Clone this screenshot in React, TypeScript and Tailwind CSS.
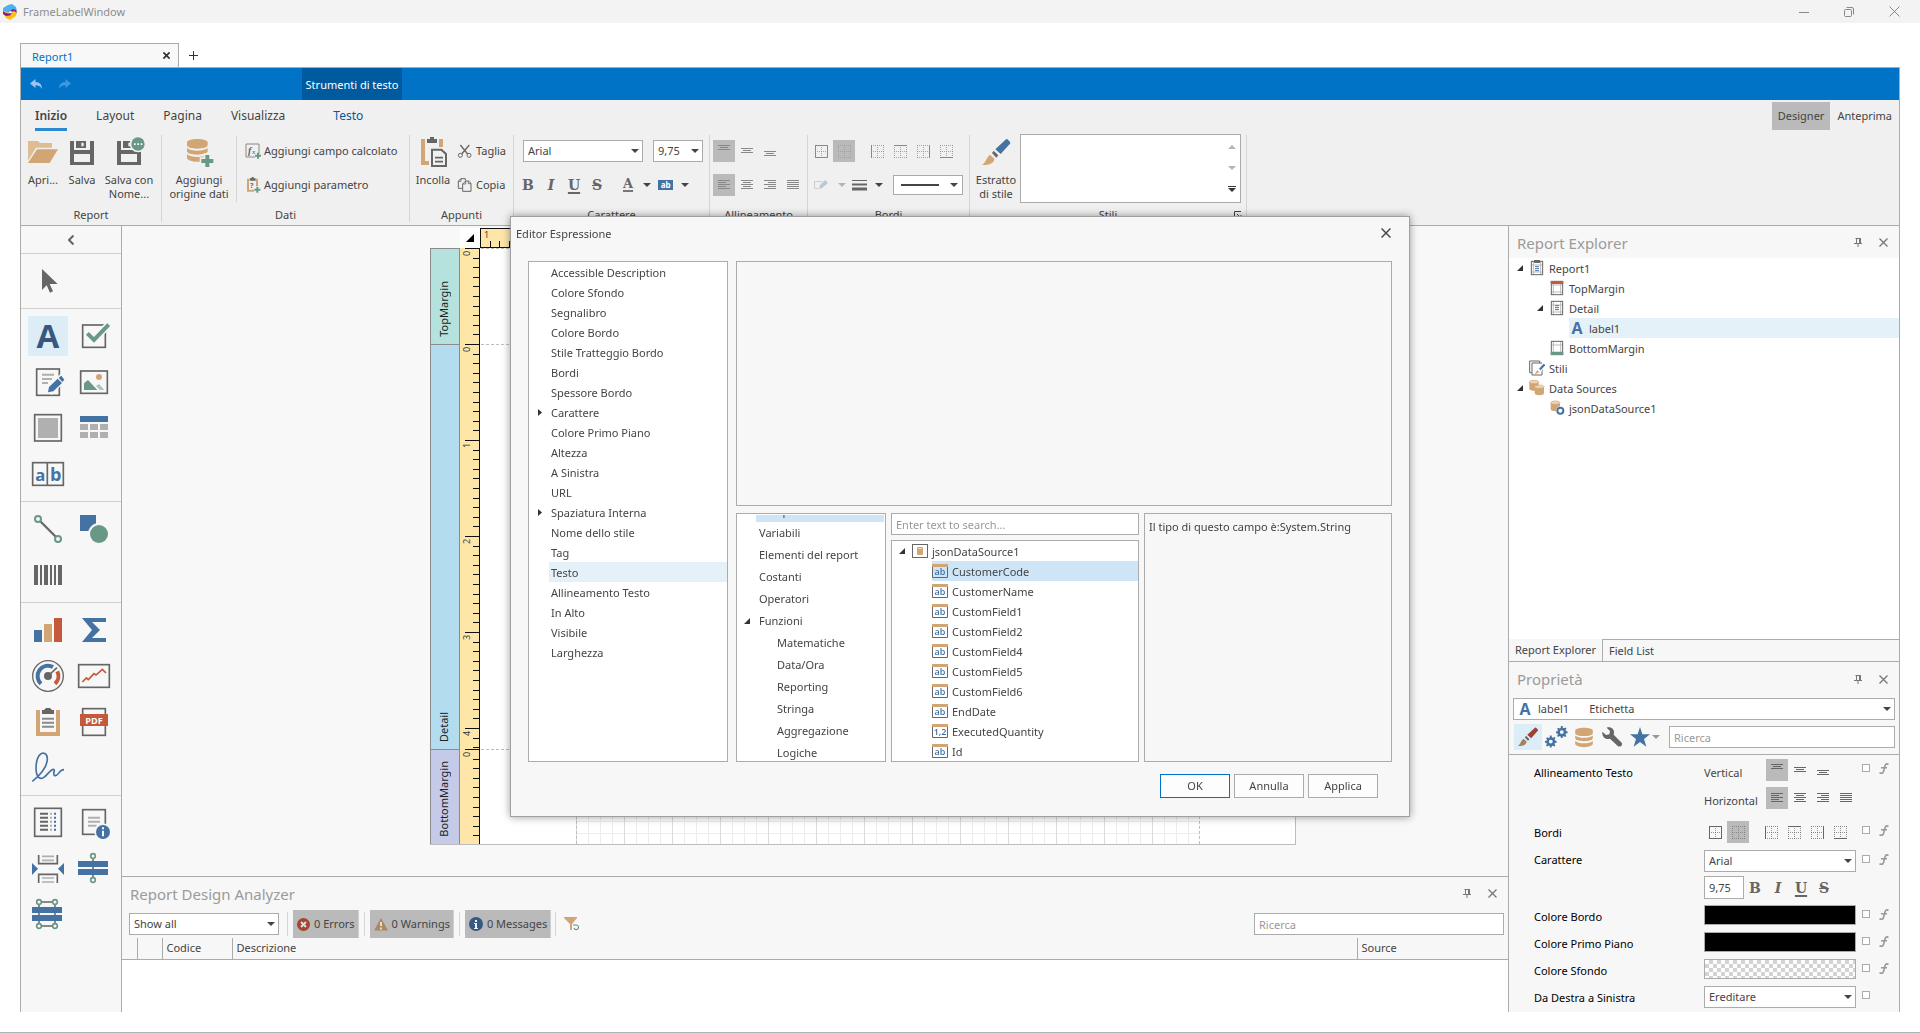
import React from "react";

const FONT = "font-['Noto_Sans','Open_Sans',sans-serif]";
const GRAY = "#666666";
const BLUE = "#4472a3";
const GREEN = "#6a9886";
const TAN = "#d2a574";
const RED = "#c4593b";

/* ---------- small shared pieces ---------- */

function Svg({ w, h, vb, children, className }: { w: number; h: number; vb: string; children: React.ReactNode; className?: string }) {
  return (
    <svg width={w} height={h} viewBox={vb} className={className ? "shrink-0 " + className : "shrink-0"} aria-hidden="true" fill="none">
      {children}
    </svg>
  );
}

function Caret({ className = "fill-[#444]" }: { className?: string }) {
  return (
    <svg width="8" height="4" viewBox="0 0 8 4" className={"shrink-0 " + className} aria-hidden="true">
      <path d="M0 0h8L4 4z" />
    </svg>
  );
}

function Expander({ open }: { open: boolean }) {
  return open ? (
    <Svg w={7} h={7} vb="0 0 7 7"><path d="M6 0v6H0z" fill="#333" /></Svg>
  ) : (
    <Svg w={5} h={9} vb="0 0 5 9"><path d="M0 1l4 3.500L0 8z" fill="#333" /></Svg>
  );
}

function Combo({ label, value, className }: { label: string; value: string; className: string }) {
  return (
    <div className={"relative h-[22px] shrink-0 " + className}>
      <select aria-label={label} defaultValue={value} className="h-full w-full appearance-none rounded-none border border-[#ababab] bg-white pl-1 pr-4 text-[#444] outline-none">
        <option>{value}</option>
      </select>
      <span className="pointer-events-none absolute inset-y-0 right-1 flex items-center"><Caret /></span>
    </div>
  );
}

function VSep({ className = "h-5" }: { className?: string }) {
  return <span className={"w-px shrink-0 bg-[#d5d5d5] " + className} />;
}

function Tool({ label, active, children, className = "h-[22px] w-[22px]" }: { label: string; active?: boolean; children: React.ReactNode; className?: string }) {
  return (
    <button type="button" aria-label={label} className={"flex shrink-0 items-center justify-center " + className + (active ? " bg-[#bababa]" : "")}>
      {children}
    </button>
  );
}

function VAlign({ at, color }: { at: number; color: string }) {
  return (
    <Svg w={13} h={14} vb="0 0 13 14">
      <g fill={color}><rect x="0" y={at} width="12" height="1" /><rect x="2" y={at + 2} width="8" height="1" /><rect x="0" y={at + 4} width="12" height="1" /></g>
    </Svg>
  );
}

function HAlign({ mode, color }: { mode: "left" | "center" | "right" | "justify"; color: string }) {
  return (
    <Svg w={13} h={10} vb="0 0 13 10">
      <g fill={color}>
        {[0, 2, 4, 6, 8].map((y, i) => {
          const w = mode === "justify" || i % 2 === 0 ? 12 : 8;
          const x = mode === "right" ? 12 - w : mode === "center" ? (12 - w) / 2 : 0;
          return <rect key={y} x={x} y={y} width={w} height="1" />;
        })}
      </g>
    </Svg>
  );
}

function BorderIcon({ side, color }: { side: "all" | "none" | "left" | "top" | "right" | "bottom"; color: string }) {
  const solid: Record<string, string> = {
    all: "M.5.5h12v12H.5z", none: "", left: "M.5 0v13", top: "M0 .5h13", right: "M12.5 0v13", bottom: "M0 12.5h13",
  };
  return (
    <Svg w={13} h={13} vb="0 0 13 13">
      <path d="M0 .5h13M0 6.5h13M0 12.5h13M.5 0v13M6.5 0v13M12.5 0v13" stroke={color} strokeOpacity="0.7" strokeDasharray="1 1" />
      <path d={solid[side]} stroke={color} />
    </Svg>
  );
}

function FontStyleButtons({ gap }: { gap: string }) {
  const base = "flex w-3 shrink-0 justify-center font-['DejaVu_Serif',serif] text-sm leading-5 font-bold text-[#666]";
  return (
    <div className={"flex items-center " + gap}>
      <button type="button" aria-label="Grassetto" className={base}>B</button>
      <button type="button" aria-label="Corsivo" className={base + " italic"}>I</button>
      <button type="button" aria-label="Sottolineato" className={base + " underline decoration-2 underline-offset-2"}>U</button>
      <button type="button" aria-label="Barrato" className={base + " line-through"}>S</button>
    </div>
  );
}

function Pin() {
  return <Svg w={9} h={9} vb="0 0 9 9"><path d="M2.5 0v5M1.5.5h5M0 5.5h8M4 6v3" stroke="#777" /><path d="M5 0h2v5H5z" fill="#777" /></Svg>;
}

function Cross({ size = 9, color = "#777", weight = 1.3 }: { size?: number; color?: string; weight?: number }) {
  return <Svg w={size} h={size} vb="0 0 9 9"><path d="M.5.5l8 8M8.5.5l-8 8" stroke={color} strokeWidth={weight} /></Svg>;
}

function PanelHeader({ title, className }: { title: string; className: string }) {
  return (
    <div className={"flex shrink-0 items-center justify-between pl-2 pr-[11px] " + className}>
      <h2 className="text-[15px] leading-5 text-[#9b9b9b]">{title}</h2>
      <div className="flex items-center gap-4">
        <button type="button" aria-label={"Fissa " + title}><Pin /></button>
        <button type="button" aria-label={"Chiudi " + title}><Cross /></button>
      </div>
    </div>
  );
}

/* ---------- ribbon icons ---------- */

const FolderIcon = () => (
  <Svg w={32} h={32} vb="0 0 96 96"><path d="M3 15h30l6 6h36v14H27L3 74z" fill="#dfbc93" /><path d="M3 81l27-41h63L68 81z" fill={TAN} /></Svg>
);
const Floppy = () => (
  <>
    <path d="M12 15h12v27h48V15h12v72H12zM24 54v24h48V54z" fillRule="evenodd" fill={GRAY} />
    <path d="M30 15h30v21H30zM46 20v11h7V20z" fillRule="evenodd" fill={GRAY} />
  </>
);
const SaveIcon = () => <Svg w={32} h={32} vb="0 0 96 96"><Floppy /></Svg>;
const SaveAsIcon = () => (
  <Svg w={32} h={32} vb="0 0 96 96"><Floppy /><circle cx="75" cy="24" r="25" fill="#f0f0f0" /><circle cx="75" cy="24" r="20" fill={GREEN} /><path d="M63 22h5v5h-5zM73 22h5v5h-5zM83 22h5v5h-5z" fill="#fff" /></Svg>
);
const Cylinder = () => (
  <g fill={TAN}>
    <path d="M12 19c0-6 14-10 31-10s31 4 31 10v9c0 6-14 10-31 10S12 34 12 28z" />
    <path d="M12 36c6 6 18 8 31 8s25-2 31-8v10c0 6-14 10-31 10S12 52 12 46z" />
    <path d="M12 55c6 6 18 8 31 8s25-2 31-8v10c0 6-14 12-31 12S12 71 12 65z" />
  </g>
);
const DbAddIcon = () => (
  <Svg w={32} h={32} vb="0 0 96 96"><Cylinder /><path d="M73 52v44M50 75h46" stroke="#f0f0f0" strokeWidth="22" /><path d="M73 57v36M55 75h36" stroke={GREEN} strokeWidth="12" /></Svg>
);
const PasteIcon = () => (
  <Svg w={32} h={32} vb="0 0 96 96"><path d="M12 9h12v66h12v12H12zM66 9h12v24H66z" fill={TAN} /><path d="M30 9h9V3h12v6h9v12H30z" fill={GRAY} /><path d="M45 41h28l14 13v36H45z" stroke={GRAY} strokeWidth="6" /><path d="M54 65h24M54 77h24" stroke={GRAY} strokeWidth="5" /></Svg>
);
const BrushShape = ({ handle, tip }: { handle: string; tip: string }) => (
  <>
    <path d="M78 10q3-2 6 1l6 7q2 3 0 5L62 54 46 40z" fill={handle} />
    <path d="M41 44l14 14-6 7-13-14z" fill={GRAY} />
    <path d="M6 87c12-7 14-25 24-31l13 12c0 14-18 20-37 19z" fill={tip} />
  </>
);
const BrushIcon = () => <Svg w={32} h={32} vb="0 0 96 96"><BrushShape handle={BLUE} tip={TAN} /></Svg>;

const CalcFieldIcon = () => (
  <Svg w={16} h={16} vb="0 0 48 48"><path d="M3 3h39v30M3 3v39h27" stroke="#888" strokeWidth="3" /><text x="9" y="32" fontSize="30" fontStyle="italic" fontWeight="bold" fontFamily="Liberation Serif" fill={GRAY}>f</text><text x="22" y="33" fontSize="18" fontStyle="italic" fontWeight="bold" fontFamily="Liberation Serif" fill={GRAY}>x</text><path d="M39 29v18M30 38h18" stroke={GREEN} strokeWidth="6" /></Svg>
);
const ParamIcon = () => (
  <Svg w={16} h={16} vb="0 0 48 48"><path d="M9 5v36h18M36 5v22" stroke={TAN} strokeWidth="6" /><path d="M14 4h18v7H14zM20 0h6v5h-6z" fill={GRAY} /><text x="15" y="33" fontSize="22" fontWeight="bold" fontFamily="Open Sans" fill={GRAY}>?</text><path d="M37 29v18M28 38h18" stroke={GREEN} strokeWidth="6" /></Svg>
);
const CutIcon = () => (
  <Svg w={16} h={16} vb="0 0 48 48"><circle cx="10" cy="37" r="6" stroke={GRAY} strokeWidth="3" /><circle cx="36" cy="37" r="6" stroke={GRAY} strokeWidth="3" /><path d="M10 6l22 27M37 6L14 33" stroke={GRAY} strokeWidth="4" /></Svg>
);
const CopyIcon = () => (
  <Svg w={16} h={16} vb="0 0 48 48"><path d="M16 34H4V12L12 5h13v6" stroke={GRAY} strokeWidth="3" /><path d="M26 12h9l7 7v24H17V21z" stroke={GRAY} strokeWidth="3" /><path d="M26 12v9h-9M12 5v8H4M34 12v8h8" stroke={GRAY} strokeWidth="2.5" /></Svg>
);

/* ---------- toolbox icons ---------- */

function TB({ children }: { children: React.ReactNode }) {
  return <Svg w={40} h={40} vb="0 0 120 120">{children}</Svg>;
}
const G6 = { stroke: GRAY, strokeWidth: 5 };

const toolbox: { name: string; icon: React.ReactNode; active?: boolean }[][] = [
  [
    { name: "Puntatore", icon: <TB><path d="M42 24v63l14-14 10 22 9-4-10-22h24z" fill={GRAY} /></TB> },
  ],
  [
    { name: "Etichetta", active: true, icon: <span className="font-['Open_Sans',sans-serif] text-[33px] leading-10 font-bold text-[#36577f]">A</span> },
    { name: "Casella di controllo", icon: <TB><rect x="26" y="27" width="68" height="67" {...G6} /><path d="M40 50l20 20 46-46" stroke="#f7f7f7" strokeWidth="22" /><path d="M40 52l20 20 44-46" stroke={GREEN} strokeWidth="12" /></TB> },
    { name: "Testo formattato", icon: <TB><rect x="26" y="21" width="68" height="79" {...G6} /><path d="M42 38h36M42 51h30M42 63h18" stroke="#b0b0b0" strokeWidth="6" /><path d="M62 90l46-46" stroke="#f7f7f7" strokeWidth="26" /><path d="M60 91l3-16 26-25 13 13-26 25zM92 47l8-6 9 12-6 7z" fill={BLUE} /></TB> },
    { name: "Immagine", icon: <TB><rect x="20" y="27" width="80" height="67" {...G6} /><circle cx="75" cy="45" r="9" fill={TAN} /><path d="M30 84V64l12-10 28 30z" fill={GREEN} /><path d="M66 72l9-6 16 18H78z" fill="#a9c5ba" /></TB> },
    { name: "Pannello", icon: <TB><rect x="20" y="20" width="80" height="79" {...G6} /><rect x="30" y="30" width="60" height="60" fill="#b0b0b0" /></TB> },
    { name: "Tabella", icon: <TB><rect x="18" y="24" width="84" height="18" fill={BLUE} /><path d="M18 48h24v18H18zM48 48h24v18H48zM78 48h24v18H78zM18 72h24v18H18zM48 72h24v18H48zM78 72h24v18H78z" fill="#b0b0b0" /></TB> },
    { name: "Testo a caratteri", icon: <TB><rect x="14" y="26" width="92" height="68" {...G6} /><path d="M58 26v68" {...G6} /><text x="22" y="80" fontSize="50" fontWeight="bold" fontFamily="Open Sans" fill={BLUE}>a</text><text x="66" y="80" fontSize="54" fontWeight="bold" fontFamily="Open Sans" fill={BLUE}>b</text></TB> },
  ],
  [
    { name: "Linea", icon: <TB><path d="M36 36l48 48" stroke={GRAY} strokeWidth="7" /><circle cx="30" cy="30" r="9" stroke={GREEN} strokeWidth="6" /><circle cx="90" cy="90" r="9" stroke={GREEN} strokeWidth="6" /></TB> },
    { name: "Forma", icon: <TB><rect x="18" y="18" width="48" height="48" fill={BLUE} /><circle cx="75" cy="75" r="33" fill="#f7f7f7" /><circle cx="75" cy="75" r="27" fill={GREEN} /></TB> },
    { name: "Codice a barre", icon: <TB><path d="M18 30h12v60H18zM36 30h6v60h-6zM48 30h12v60H48zM66 30h6v60h-6zM78 30h6v60h-6zM90 30h12v60H90z" fill={GRAY} /></TB> },
  ],
  [
    { name: "Grafico", icon: <TB><rect x="18" y="60" width="24" height="36" fill={BLUE} /><rect x="48" y="42" width="24" height="54" fill={TAN} /><rect x="78" y="24" width="24" height="72" fill={RED} /></TB> },
    { name: "Tabella pivot", icon: <TB><path d="M24 24h72v12H54l24 24-24 24h42v12H24l30-36z" fill={BLUE} /></TB> },
    { name: "Indicatore", icon: <TB><circle cx="60" cy="60" r="46" stroke={GRAY} strokeWidth="4" /><path d="M39 83A31 31 0 0 1 75 33" stroke={BLUE} strokeWidth="12" /><path d="M88 46A31 31 0 0 1 81 83" stroke={RED} strokeWidth="12" /><circle cx="60" cy="60" r="12" fill={GRAY} /><path d="M60 60l27-25" stroke={GRAY} strokeWidth="5" /></TB> },
    { name: "Sparkline", icon: <TB><rect x="14" y="26" width="92" height="68" {...G6} /><path d="M25 78l12-12 6 5 17-18 6 4 19-17 11 11" stroke={RED} strokeWidth="5" /></TB> },
    { name: "Sottoreport", icon: <TB><path d="M24 24h12v66h48V24h12v78H24z" fill={TAN} /><path d="M42 24h6l6-6h12l6 6h6v12H42z" fill={GRAY} /><path d="M42 50h36M42 62h36M42 74h36" stroke="#8a8a8a" strokeWidth="6" /></TB> },
    { name: "Contenuto PDF", icon: <TB><rect x="26" y="20" width="68" height="80" {...G6} /><rect x="18" y="36" width="84" height="36" fill={RED} /><text x="60" y="65" textAnchor="middle" fontSize="27" fontWeight="bold" fontFamily="Open Sans" fill="#fff">PDF</text></TB> },
    { name: "Firma", icon: <TB><path d="M13 100C38 80 58 58 58 32c0-17-14-20-22-12-14 14-16 56-4 68 16 14 32-24 44-24 8 0-4 16 4 19 12 2 12-18 28-18" stroke={BLUE} strokeWidth="5" /></TB> },
  ],
  [
    { name: "Sommario", icon: <TB><rect x="20" y="16" width="80" height="84" {...G6} /><path d="M36 32h24M36 44h24M36 56h24M36 68h24M36 80h24" stroke={GRAY} strokeWidth="6" /><path d="M69 29v56" stroke="#b0b0b0" strokeWidth="6" strokeDasharray="6 6" /><path d="M81 29v56" stroke={BLUE} strokeWidth="6" strokeDasharray="6 6" /></TB> },
    { name: "Informazioni pagina", icon: <TB><rect x="26" y="20" width="68" height="74" {...G6} /><path d="M42 44h36M42 56h36M42 68h26" stroke="#b0b0b0" strokeWidth="6" /><circle cx="87" cy="87" r="26" fill="#f7f7f7" /><circle cx="87" cy="87" r="21" fill={BLUE} /><path d="M84 73h6v6h-6zM84 83h6v17h-6z" fill="#fff" /></TB> },
    { name: "Interruzione di pagina", icon: <TB><path d="M32 18v26h56V18M32 102V76h56v26" {...G6} /><path d="M42 22h36M42 34h36M42 87h36M42 99h36" stroke="#b0b0b0" strokeWidth="5" /><path d="M12 42l18 17-18 19zM108 42L90 59l18 19z" fill={BLUE} /></TB> },
    { name: "Linea tra bande", icon: <TB><path d="M57 27v60" stroke="#888" strokeWidth="6" /><circle cx="57" cy="21" r="7" stroke={GREEN} strokeWidth="5" /><circle cx="57" cy="93" r="7" stroke={GREEN} strokeWidth="5" /><path d="M12 36h90v18H12zM12 60h90v18H12z" fill={BLUE} /></TB> },
    { name: "Riquadro tra bande", icon: <TB><rect x="33" y="21" width="48" height="72" stroke="#888" strokeWidth="6" /><g stroke={GREEN} strokeWidth="5" fill="#f7f7f7"><circle cx="33" cy="21" r="7" /><circle cx="81" cy="21" r="7" /><circle cx="33" cy="93" r="7" /><circle cx="81" cy="93" r="7" /></g><path d="M12 36h90v18H12zM12 60h90v18H12z" fill={BLUE} /></TB> },
  ],
];

/* ---------- window frame ---------- */

function TitleBar() {
  return (
    <header className="flex h-[23px] shrink-0 items-center justify-between bg-[#f3f3f3] pl-[3px] pr-5">
      <div className="flex items-center gap-1.5">
        <Svg w={14} h={16} vb="0 0 14 16"><path d="M0 9l3 5 4 2 6-4 1-4-3-1-3 3-4-2z" fill="#fcc10f" /><path d="M5 1l4-1 4 3 1 4-4-1-2 3-5-1-3-1V4z" fill="#4db2ec" /><path d="M0 7l3 2 3 .5 2-1.500 1 1-2 2.500-4 .5L0 10zM14 9l-1-3-3-1-3 2 2 1 2-1z" fill="#8c1a8c" /><path d="M6 8l2-1 1 1.500-2 1z" fill="#fff" /></Svg>
        <span className="text-[11px] leading-4 text-[#8d8d8d]">FrameLabelWindow</span>
      </div>
      <div className="flex items-center gap-[35px]">
        <button type="button" aria-label="Riduci a icona"><Svg w={10} h={10} vb="0 0 10 10"><path d="M0 5.5h10" stroke="#888" /></Svg></button>
        <button type="button" aria-label="Ripristina"><Svg w={10} h={10} vb="0 0 10 10"><rect x=".5" y="2.5" width="7" height="7" rx="1" stroke="#888" /><path d="M2.5.5H8A1.5 1.5 0 0 1 9.500 2v5.500" stroke="#888" /></Svg></button>
        <button type="button" aria-label="Chiudi"><Svg w={11} h={11} vb="0 0 11 11"><path d="M.5.5l10 10M10.500.5l-10 10" stroke="#888" /></Svg></button>
      </div>
    </header>
  );
}

function Group({ title, width, children, extra }: { title: string; width: string; children: React.ReactNode; extra?: React.ReactNode }) {
  return (
    <section aria-label={title} className={"flex shrink-0 flex-col " + width}>
      <div className="mt-px flex h-[87px] flex-col border-r border-[#d5d5d5]">
        <div className="h-[72px] shrink-0">{children}</div>
        <div className="relative h-[15px] text-center leading-[15px]">{title}{extra}</div>
      </div>
    </section>
  );
}

function BigButton({ icon, lines, className }: { icon: React.ReactNode; lines: string[]; className?: string }) {
  return (
    <button type="button" className={"flex shrink-0 flex-col items-center pt-px leading-[14px] " + (className ?? "")}>
      {icon}
      <span className="mt-[5px] whitespace-nowrap">{lines.map((l) => <span key={l} className="block">{l}</span>)}</span>
    </button>
  );
}

function SmallButton({ icon, label }: { icon: React.ReactNode; label: string }) {
  return <button type="button" className="flex h-[22px] items-center gap-[3px] whitespace-nowrap">{icon}{label}</button>;
}

function Ribbon() {
  const c = "#888";
  return (
    <div className="shrink-0 border-b border-[#ababab] bg-[#f0f0f0] pb-[3px]">
      <div className="flex h-[34px] items-start justify-between">
        <nav className="flex pl-[14px] text-xs leading-[32px]">
          <button type="button" className="mr-[29px] h-[31px] border-b-[3px] border-[#2a8ad4] font-semibold">Inizio</button>
          <button type="button" className="mr-[29px]">Layout</button>
          <button type="button" className="mr-[29px]">Pagina</button>
          <button type="button" className="mr-12">Visualizza</button>
          <button type="button" className="text-[#005a9e]">Testo</button>
        </nav>
        <div className="flex pt-0.5 leading-7">
          <button type="button" className="bg-[#bababa] px-1.5">Designer</button>
          <button type="button" className="pl-[7px] pr-[7px]">Anteprima</button>
        </div>
      </div>
      <div className="flex">
        <Group title="Report" width="w-[141px]">
          <div className="flex">
            <BigButton icon={<FolderIcon />} lines={["Apri..."]} className="w-[44px]" />
            <BigButton icon={<SaveIcon />} lines={["Salva"]} className="w-[34px]" />
            <BigButton icon={<SaveAsIcon />} lines={["Salva con", "Nome..."]} className="w-[60px]" />
          </div>
        </Group>
        <Group title="Dati" width="w-[248px]">
          <div className="flex">
            <BigButton icon={<DbAddIcon />} lines={["Aggiungi", "origine dati"]} className="w-[74px]" />
            <VSep className="mt-px h-[66px]" />
            <div className="flex flex-col gap-3 pl-2 pt-[5px]">
              <SmallButton icon={<CalcFieldIcon />} label="Aggiungi campo calcolato" />
              <SmallButton icon={<ParamIcon />} label="Aggiungi parametro" />
            </div>
          </div>
        </Group>
        <Group title="Appunti" width="w-[104px]">
          <div className="flex">
            <BigButton icon={<PasteIcon />} lines={["Incolla"]} className="w-[46px]" />
            <div className="flex flex-col gap-3 pl-px pt-[5px]">
              <SmallButton icon={<CutIcon />} label="Taglia" />
              <SmallButton icon={<CopyIcon />} label="Copia" />
            </div>
          </div>
        </Group>
        <Group title="Carattere" width="w-[196px]">
          <div className="flex flex-col gap-3 pl-2 pt-[5px]">
            <div className="flex gap-[10px] pl-px">
              <Combo label="Tipo di carattere" value="Arial" className="w-[120px]" />
              <Combo label="Dimensione" value="9,75" className="w-[50px]" />
            </div>
            <div className="flex h-[22px] items-center">
              <FontStyleButtons gap="gap-[11px]" />
              <VSep className="ml-[10px]" />
              <button type="button" aria-label="Colore testo" className="ml-[9px] flex items-center gap-[10px]">
                <span className="border-b-2 border-[#777] font-['DejaVu_Serif',serif] text-[13px] leading-3 font-bold text-[#666]">A</span><Caret />
              </button>
              <button type="button" aria-label="Colore sfondo" className="ml-[7px] flex items-center gap-2">
                <span className="h-[10px] w-[15px] bg-[#4472a3] text-center text-[8px] leading-[9px] font-bold text-white">ab</span><Caret />
              </button>
            </div>
          </div>
        </Group>
        <Group title="Allineamento" width="w-[98px]">
          <div className="flex flex-col gap-3 pl-[3px] pt-[5px]">
            <div className="flex gap-px">
              <Tool label="In alto" active><VAlign at={1} color={c} /></Tool>
              <Tool label="Al centro verticale"><VAlign at={4} color={c} /></Tool>
              <Tool label="In basso"><VAlign at={7} color={c} /></Tool>
            </div>
            <div className="flex gap-px">
              <Tool label="Sinistra" active><HAlign mode="left" color={c} /></Tool>
              <Tool label="Centro"><HAlign mode="center" color={c} /></Tool>
              <Tool label="Destra"><HAlign mode="right" color={c} /></Tool>
              <Tool label="Giustificato"><HAlign mode="justify" color={c} /></Tool>
            </div>
          </div>
        </Group>
        <Group title="Bordi" width="w-[162px]">
          <div className="flex flex-col gap-3 pl-0.5 pt-[5px]">
            <div className="flex items-center gap-px">
              <Tool label="Tutti i bordi"><BorderIcon side="all" color={c} /></Tool>
              <Tool label="Nessun bordo" active><BorderIcon side="none" color="#999" /></Tool>
              <VSep className="mx-1" />
              <Tool label="Bordo sinistro"><BorderIcon side="left" color={c} /></Tool>
              <Tool label="Bordo superiore"><BorderIcon side="top" color={c} /></Tool>
              <Tool label="Bordo destro"><BorderIcon side="right" color={c} /></Tool>
              <Tool label="Bordo inferiore"><BorderIcon side="bottom" color={c} /></Tool>
            </div>
            <div className="flex h-[22px] items-center pl-1">
              <button type="button" aria-label="Colore bordo" className="flex items-center gap-2">
                <Svg w={16} h={12} vb="0 0 16 12"><path d="M8 2.500H.5v7h4" stroke="#ccc" /><path d="M5 10l1-4 5-5 3 3-6 5z" fill="#b9c9da" /></Svg><Caret className="fill-[#b5b5b5]" />
              </button>
              <button type="button" aria-label="Spessore bordo" className="ml-1.5 flex items-center gap-2">
                <Svg w={15} h={11} vb="0 0 15 11"><path d="M0 .5h15" stroke={GRAY} /><path d="M0 4.500h15" stroke={GRAY} strokeWidth="2" /><path d="M0 9h15" stroke={GRAY} strokeWidth="3" /></Svg><Caret />
              </button>
              <button type="button" aria-label="Stile linea" className="ml-2.5 flex h-5 w-[70px] items-center justify-between border border-[#ababab] bg-white pl-[7px] pr-1">
                <span className="h-0.5 w-[38px] bg-[#444]" /><Caret />
              </button>
            </div>
          </div>
        </Group>
        <Group title="Stili" width="w-[277px]" extra={<button type="button" aria-label="Altre opzioni stili" className="absolute right-1 top-1"><Svg w={8} h={8} vb="0 0 8 8"><path d="M.5 6V.5H7M3 3l4 4M7 4v3H4" stroke="#444" /></Svg></button>}>
          <div className="flex">
            <BigButton icon={<BrushIcon />} lines={["Estratto", "di stile"]} className="w-[50px] pl-0.5" />
            <div className="-mt-px flex h-[69px] w-[221px] justify-end border border-[#ababab] bg-white">
              <div className="flex w-4 flex-col items-center justify-between py-[10px]">
                <button type="button" aria-label="Scorri su"><Svg w={8} h={4} vb="0 0 8 4"><path d="M4 0l4 4H0z" fill="#b5b5b5" /></Svg></button>
                <button type="button" aria-label="Scorri giù" className="flex"><Caret className="fill-[#b5b5b5]" /></button>
                <button type="button" aria-label="Altri stili"><Svg w={8} h={6} vb="0 0 8 6"><path d="M0 0h8v1H0zM0 2h8L4 6z" fill="#333" /></Svg></button>
              </div>
            </div>
          </div>
        </Group>
      </div>
    </div>
  );
}

function Toolbox() {
  return (
    <aside aria-label="Casella degli strumenti" className="flex w-[101px] shrink-0 flex-col border-r border-[#ababab] bg-[#f7f7f7]">
      <button type="button" aria-label="Comprimi" className="flex h-[27px] shrink-0 items-center justify-center">
        <Svg w={6} h={10} vb="0 0 6 10"><path d="M5.500.5L1 5l4.500 4.500" stroke={GRAY} strokeWidth="2" /></Svg>
      </button>
      {toolbox.map((section, i) => (
        <div key={i} className="grid grid-cols-[40px_40px] gap-1.5 border-t border-[#d0d0d0] p-[7px]">
          {section.map((t) => (
            <button key={t.name} type="button" aria-label={t.name} className={"flex h-10 w-10 items-center justify-center" + (t.active ? " bg-[#dcedf8]" : "")}>{t.icon}</button>
          ))}
        </div>
      ))}
    </aside>
  );
}

/* ---------- design surface ---------- */

function VRuler({ height }: { height: number }) {
  const ticks = Array.from({ length: Math.floor((height - 1) / 9.6) + 1 }, (_, i) => i);
  return (
    <svg width="21" height={height} viewBox={`0 0 21 ${height}`} className="block shrink-0 bg-[#fee6a8]" aria-hidden="true">
      {ticks.map((i) => {
        const y = Math.round(i * 9.6);
        return <rect key={i} x={i % 10 ? 13 : 5} y={y} width={i % 10 ? 7 : 15} height="1" fill="#111" />;
      })}
      {ticks.filter((i) => i % 10 === 0).map((i) => (
        <text key={i} x={-(i * 9.6 + 8)} y="10" transform="rotate(-90)" fontSize="9" fontFamily="Open Sans" fill="#333">{i / 10}</text>
      ))}
      <rect x="19" y="0" width="1" height={height} fill="#111" />
      <rect x="20" y="0" width="1" height={height} fill="#fff" />
    </svg>
  );
}

function Band({ name, label, height, color }: { name: string; label: string; height: number; color: string }) {
  return (
    <div className={"flex " + label}>
      <div className={"flex w-[30px] items-end justify-center border-l border-r border-t border-[#8b8b8b] pb-[7px] pr-1 text-[#222] " + color}>
        <span className="rotate-180 whitespace-nowrap leading-none [writing-mode:vertical-rl]">{name}</span>
      </div>
      <VRuler height={height} />
      <div className="flex flex-1 border-r border-t border-dashed border-[#bdbdbd] bg-white pl-[95px] pr-[95px] [border-right-style:solid]">
        <div className="flex-1 border-l border-r border-dashed border-[#bdbdbd] bg-[linear-gradient(to_right,transparent_47px,#dcdcdc_47px),linear-gradient(to_right,transparent_11px,#ededed_11px),linear-gradient(to_bottom,transparent_11px,#ededed_11px)] bg-[size:48px_48px,12px_12px,12px_12px]" />
      </div>
    </div>
  );
}

function DesignSurface() {
  return (
    <div className="min-h-0 flex-1 overflow-hidden bg-[#f8f8f8] pl-[308px] pt-0.5">
      <div className="w-[866px] border-b border-[#bdbdbd]">
        <div className="flex h-5 pl-[30px]">
          <div className="flex w-5 items-center justify-center bg-white"><Svg w={8} h={8} vb="0 0 8 8"><path d="M8 0v8H0z" fill="#000" /></Svg></div>
          <svg width="816" height="20" viewBox="0 0 816 20" className="block bg-[#fee6a8]" aria-hidden="true">
            <path d="M0 .5h816M0 19.500h816M.5 0v20" stroke="#111" />
            {Array.from({ length: 84 }, (_, i) => <rect key={i} x={Math.round((i + 1) * 9.6)} y="13" width="1" height="6" fill="#111" />)}
            <text x="4" y="10" fontSize="9" fontFamily="Open Sans" fill="#333">1</text>
          </svg>
        </div>
        <Band name="TopMargin" label="h-24" height={96} color="bg-[#b5e2dc]" />
        <Band name="Detail" label="h-[405px]" height={405} color="bg-[#b3ddee]" />
        <Band name="BottomMargin" label="h-[95px]" height={95} color="bg-[#c5cae8]" />
      </div>
    </div>
  );
}

/* ---------- analyzer ---------- */

function FilterButton({ icon, label }: { icon: React.ReactNode; label: string }) {
  return (
    <button type="button" className="flex h-7 items-center gap-1 whitespace-nowrap border-r border-[#d0d0d0] bg-[#bababa] pl-1 pr-[3px]">{icon}{label}</button>
  );
}

function Analyzer() {
  return (
    <section aria-label="Report Design Analyzer" className="flex h-[136px] shrink-0 flex-col border-t border-[#ababab] bg-[#f7f7f7]">
      <PanelHeader title="Report Design Analyzer" className="h-[33px]" />
      <div className="flex h-7 shrink-0 items-center pl-[7px] pr-1">
        <Combo label="Filtro" value="Show all" className="w-[150px]" />
        <VSep className="ml-2 mr-[5px] h-6" />
        <FilterButton icon={<Svg w={13} h={13} vb="0 0 13 13"><circle cx="6.500" cy="6.500" r="6.500" fill="#a5452f" /><path d="M4 4l5 5M9 4L4 9" stroke="#ddd" strokeWidth="2" /></Svg>} label="0 Errors" />
        <VSep className="mx-[5px] h-6" />
        <FilterButton icon={<Svg w={14} h={13} vb="0 0 14 13"><path d="M7 0l7 12.500H0z" fill="#b08860" /><path d="M6 4h2v4H6zM6 9.500h2v2H6z" fill="#ddd" /></Svg>} label="0 Warnings" />
        <VSep className="mx-[5px] h-6" />
        <FilterButton icon={<Svg w={14} h={14} vb="0 0 14 14"><circle cx="7" cy="7" r="7" fill="#365a82" /><path d="M6 3h2v2H6zM5 6h3v5h1v1H5v-1h1V7H5z" fill="#eee" /></Svg>} label="0 Messages" />
        <VSep className="mx-1 h-6" />
        <button type="button" aria-label="Reimposta filtro" className="ml-1"><Svg w={16} h={16} vb="0 0 16 16"><path d="M0 1h13v1L8 8v6H6V8L0 2z" fill={TAN} /><path d="M9 9h3.500a2.300 2.300 0 1 1-2.500 3" stroke={GREEN} strokeWidth="1.200" /></Svg></button>
        <input aria-label="Ricerca messaggi" placeholder="Ricerca" className="ml-auto h-[22px] w-[250px] border border-[#ababab] bg-white px-1 outline-none placeholder:text-[#999]" />
      </div>
      <table className="w-full table-fixed border-collapse text-left">
        <thead>
          <tr className="h-[21px] border-b border-[#ababab]">
            <th className="w-[15px]" />
            <th className="w-[25px] border-l border-[#ababab]" />
            <th className="w-[70px] border-l border-[#ababab] pl-1 font-normal">Codice</th>
            <th className="border-l border-[#ababab] pl-1 font-normal">Descrizione</th>
            <th className="w-[151px] border-l border-[#ababab] pl-1 font-normal">Source</th>
          </tr>
        </thead>
      </table>
      <div className="flex-1 bg-white" />
    </section>
  );
}

/* ---------- right panels ---------- */

const PageFrame = ({ children }: { children?: React.ReactNode }) => (
  <Svg w={16} h={16} vb="0 0 48 48"><path d="M6 15h36M6 36h36M13 3v42M35 3v42" stroke="#bbb" strokeWidth="3" /><rect x="7" y="4" width="34" height="40" stroke={GRAY} strokeWidth="3" />{children}</Svg>
);
const LetterA = () => <span className="w-4 text-center font-['Open_Sans',sans-serif] text-base leading-5 font-bold text-[#4472a3]">A</span>;
const MiniCyl = ({ x, y }: { x: number; y: number }) => (
  <g><path d={`M${x} ${y + 5}v20c0 8 28 8 28 0v-20z`} fill={TAN} /><ellipse cx={x + 14} cy={y + 5} rx="14" ry="5" fill="#ecd6ba" stroke={TAN} strokeWidth="2" /></g>
);

const explorer: { label: string; depth: number; open?: boolean; icon: React.ReactNode; selected?: boolean }[] = [
  { label: "Report1", depth: 0, open: true, icon: <PageFrame><path d="M15 0h18v9H15z" fill={GRAY} /><path d="M18 20h12M18 26h12M18 32h12" stroke={BLUE} strokeWidth="3" /></PageFrame> },
  { label: "TopMargin", depth: 1, icon: <PageFrame><path d="M5 3h38v9H5z" fill={RED} /></PageFrame> },
  { label: "Detail", depth: 1, open: true, icon: <PageFrame><path d="M18 17h12M18 23h12M18 29h12" stroke={BLUE} strokeWidth="3" /></PageFrame> },
  { label: "label1", depth: 2, icon: <LetterA />, selected: true },
  { label: "BottomMargin", depth: 1, icon: <PageFrame><path d="M5 36h38v9H5z" fill={GREEN} /></PageFrame> },
  { label: "Stili", depth: 0, icon: <Svg w={16} h={16} vb="0 0 48 48"><path d="M8 38H2V3h30v6M9 9h30v36H9z" stroke={GRAY} strokeWidth="3" /><path d="M26 30L44 8l6 5-17 22z" fill="#fff" stroke="#fff" strokeWidth="5" /><path d="M30 26L44 11l5 4-14 16z" fill={BLUE} /><path d="M16 44l9-14 6 6z" fill={TAN} /></Svg> },
  { label: "Data Sources", depth: 0, open: true, icon: <Svg w={16} h={16} vb="0 0 48 48"><MiniCyl x={1} y={1} /><MiniCyl x={17} y={15} /></Svg> },
  { label: "jsonDataSource1", depth: 1, icon: <Svg w={16} h={16} vb="0 0 48 48"><MiniCyl x={5} y={3} /><circle cx="34" cy="32" r="13" fill="#fff" /><circle cx="34" cy="32" r="9" stroke={BLUE} strokeWidth="6" /></Svg> },
];
const explorerIndent = ["pl-2", "pl-7", "pl-12"];

function ReportExplorer() {
  return (
    <section aria-label="Report Explorer" className="flex min-h-0 flex-1 flex-col">
      <PanelHeader title="Report Explorer" className="h-8 pt-px" />
      <ul role="tree" className="min-h-0 flex-1 overflow-hidden bg-white">
        {explorer.map((n) => (
          <li key={n.label} role="treeitem" aria-selected={!!n.selected} className={"flex h-5 items-center " + explorerIndent[n.depth]}>
            <span className="w-3 shrink-0">{n.open && <Expander open />}</span>
            <span className={"flex h-5 flex-1 items-center gap-1" + (n.selected ? " bg-[#e4f1f9]" : "")}>{n.icon}<span className="pt-0.5">{n.label}</span></span>
          </li>
        ))}
      </ul>
      <div role="tablist" className="flex h-[23px] shrink-0 border-b border-[#ababab]">
        <button type="button" role="tab" aria-selected="true" className="w-[94px] border-r border-[#ababab] pl-1.5 text-left whitespace-nowrap">Report Explorer</button>
        <button type="button" role="tab" aria-selected="false" className="flex-1 border-t border-[#ababab] pl-1.5 text-left">Field List</button>
      </div>
    </section>
  );
}

function Row({ label, children, fx = true, className, labelClass = "leading-6" }: { label: string; children: React.ReactNode; fx?: boolean; className: string; labelClass?: string }) {
  return (
    <div className={"flex items-start pr-[9px] pl-[25px] " + className}>
      <span className={"w-[170px] shrink-0 text-black " + labelClass}>{label}</span>
      <div className="min-w-0 flex-1">{children}</div>
      <div className="flex h-[18px] w-7 shrink-0 items-center gap-[9px]">
        <button type="button" aria-label={"Opzioni " + label} className="h-2 w-2 shrink-0 border border-[#ababab] bg-white" />
        {fx && <button type="button" aria-label={"Espressione " + label} className="flex"><Svg w={10} h={11} vb="0 0 10 11"><path d="M9.500 1.500C7.500.3 6.500 1 6 3L4.500 8.500C4 10.500 2.500 10.800.5 9.800M2 4.700h6" stroke="#999" strokeWidth="1.600" /></Svg></button>}
      </div>
    </div>
  );
}

const gearPath = "M9 0h3l.5 3 2 1 2.600-1.500 2 2.200L17.500 7.300l.7 2L21 10v3l-3 .500-.8 2 1.600 2.500-2 2-2.500-1.500-2 .8L12 22H9l-.6-2.800-2-.8L3.900 20l-2-2 1.600-2.500-.8-2L0 13v-3l2.800-.6.8-2L2 5l2-2 2.500 1.500 2-.8z";

function Properties() {
  const c = "#666";
  return (
    <section aria-label="Proprietà" className="flex h-[350px] shrink-0 flex-col">
      <PanelHeader title="Proprietà" className="h-[34px]" />
      <div className="relative mx-1 mt-0.5 h-[22px] shrink-0">
        <select aria-label="Elemento selezionato" className="h-full w-full appearance-none rounded-none border border-[#ababab] bg-white pl-6 text-[#444] outline-none">
          <option>{"label1\u00a0\u00a0\u00a0\u00a0\u00a0\u00a0 Etichetta"}</option>
        </select>
        <span className="pointer-events-none absolute inset-y-0 left-1 flex items-center"><LetterA /></span>
        <span className="pointer-events-none absolute inset-y-0 right-1 flex items-center"><Caret /></span>
      </div>
      <div className="flex h-[35px] shrink-0 items-center border-b border-[#ababab] pl-[5px] pr-1">
        <Tool label="Aspetto" className="h-[26px] w-7 bg-[#dcedf8]"><Svg w={22} h={22} vb="3 3 92 92"><BrushShape handle="#a04030" tip="#a5825c" /></Svg></Tool>
        <Tool label="Comportamento" className="h-[26px] w-7"><Svg w={23} h={22} vb="0 0 46 44">
          <g fill={BLUE} fillRule="evenodd"><path d={gearPath + "M10.500 7.500a3.500 3.500 0 1 0 .01 7 3.500 3.500 0 1 0-.01-7z"} transform="translate(22 0) scale(1.100)" /><path d={gearPath + "M10.500 7.500a3.500 3.500 0 1 0 .01 7 3.500 3.500 0 1 0-.01-7z"} transform="translate(0 19) scale(1.100)" /></g>
        </Svg></Tool>
        <Tool label="Dati" className="h-[26px] w-[28px]"><Svg w={20} h={21} vb="9 6 68 74"><Cylinder /></Svg></Tool>
        <Tool label="Progettazione" className="h-[26px] w-7"><Svg w={20} h={20} vb="0 0 60 60"><path d="M14 2c10-4 24 3 22 17l-1 4 24 24c4 8-4 14-11 11L24 35C10 40-1 28 1 14l11 10 10-2 2-10z" fill={GRAY} /></Svg></Tool>
        <Tool label="Preferiti" className="h-[26px] w-[38px] gap-0.5"><Svg w={20} h={20} vb="0 0 60 60"><path d="M30 0l7 22h23L42 36l7 23-19-14-19 14 7-23L0 22h23z" fill={BLUE} /></Svg><Caret className="fill-[#999]" /></Tool>
        <input aria-label="Ricerca proprietà" placeholder="Ricerca" className="ml-[5px] h-[22px] min-w-0 flex-1 border border-[#ababab] bg-white px-1 outline-none placeholder:text-[#999]" />
      </div>
      <div className="flex-1 overflow-hidden">
        <Row label="Allineamento Testo" className="h-[66px] pt-1" labelClass="leading-7">
          <div className="flex gap-px"><span className="w-[61px] leading-7">Vertical</span>
            <Tool label="In alto" active><VAlign at={1} color={c} /></Tool><Tool label="Al centro verticale"><VAlign at={4} color={c} /></Tool><Tool label="In basso"><VAlign at={7} color={c} /></Tool>
          </div>
          <div className="flex gap-px"><span className="w-[61px] leading-7">Horizontal</span>
            <Tool label="Sinistra" active><HAlign mode="left" color={c} /></Tool><Tool label="Centro"><HAlign mode="center" color={c} /></Tool><Tool label="Destra"><HAlign mode="right" color={c} /></Tool><Tool label="Giustificato"><HAlign mode="justify" color={c} /></Tool>
          </div>
        </Row>
        <Row label="Bordi" className="h-[29px]">
          <div className="flex items-center gap-px">
            <Tool label="Tutti i bordi"><BorderIcon side="all" color={c} /></Tool>
            <Tool label="Nessun bordo" active><BorderIcon side="none" color="#777" /></Tool>
            <VSep className="mx-1" />
            <Tool label="Bordo sinistro"><BorderIcon side="left" color={c} /></Tool>
            <Tool label="Bordo superiore"><BorderIcon side="top" color={c} /></Tool>
            <Tool label="Bordo destro"><BorderIcon side="right" color={c} /></Tool>
            <Tool label="Bordo inferiore"><BorderIcon side="bottom" color={c} /></Tool>
          </div>
        </Row>
        <Row label="Carattere" className="h-[55px]" labelClass="leading-5">
          <Combo label="Tipo di carattere" value="Arial" className="w-[152px]" />
          <div className="mt-1 flex items-center">
            <input aria-label="Dimensione carattere" defaultValue="9,75" className="mr-[5px] h-[23px] w-10 border border-[#ababab] bg-white px-1 outline-none" />
            <FontStyleButtons gap="gap-[11px]" />
          </div>
        </Row>
        <Row label="Colore Bordo" className="h-[27px]"><button type="button" aria-label="Colore Bordo: nero" className="block h-5 w-[152px] border border-[#ababab] bg-black" /></Row>
        <Row label="Colore Primo Piano" className="h-[27px]"><button type="button" aria-label="Colore Primo Piano: nero" className="block h-5 w-[152px] border border-[#ababab] bg-black" /></Row>
        <Row label="Colore Sfondo" className="h-[27px]"><button type="button" aria-label="Colore Sfondo: trasparente" className="block h-5 w-[152px] border border-[#ababab] bg-white bg-[conic-gradient(#d3d3d3_25%,#fff_0_50%,#d3d3d3_0_75%,#fff_0)] bg-[size:8px_8px]" /></Row>
        <Row label="Da Destra a Sinistra" fx={false} className="h-[26px]"><Combo label="Da Destra a Sinistra" value="Ereditare" className="w-[152px]" /></Row>
      </div>
    </section>
  );
}

/* ---------- expression editor ---------- */

const properties = ["Accessible Description", "Colore Sfondo", "Segnalibro", "Colore Bordo", "Stile Tratteggio Bordo", "Bordi", "Spessore Bordo", "Carattere", "Colore Primo Piano", "Altezza", "A Sinistra", "URL", "Spaziatura Interna", "Nome dello stile", "Tag", "Testo", "Allineamento Testo", "In Alto", "Visibile", "Larghezza"];
const expandable = ["Carattere", "Spaziatura Interna"];
const categories = ["Variabili", "Elementi del report", "Costanti", "Operatori"];
const functions = ["Matematiche", "Data/Ora", "Reporting", "Stringa", "Aggregazione", "Logiche"];
const fields = ["CustomerCode", "CustomerName", "CustomField1", "CustomField2", "CustomField4", "CustomField5", "CustomField6", "EndDate", "ExecutedQuantity", "Id"];

function FieldIcon({ text }: { text: string }) {
  return (
    <Svg w={16} h={14} vb="0 0 16 14"><path d="M.5 2v11.500h15V2" stroke={GRAY} /><path d="M0 0h16v3H0z" fill={TAN} /><text x="8" y="11" textAnchor="middle" fontSize="9" fontWeight="600" fontFamily="Open Sans" fill={BLUE}>{text}</text></Svg>
  );
}

function ExpressionEditor() {
  return (
    <div className="fixed inset-0 flex items-center justify-center">
      <div role="dialog" aria-label="Editor Espressione" className="flex h-[601px] w-[900px] flex-col border border-[#a0a0a0] bg-[#f7f7f7] shadow-[0_0_8px_rgba(0,0,0,0.4)]">
        <div className="flex h-11 shrink-0 items-start justify-between pl-[5px] pr-[18px] pt-2">
          <h1 className="leading-[18px]">Editor Espressione</h1>
          <button type="button" aria-label="Chiudi editor" className="flex h-4 items-center"><Cross size={10} color="#444" /></button>
        </div>
        <div className="flex min-h-0 flex-1 gap-2 px-[17px]">
          <ul role="tree" className="w-[200px] shrink-0 overflow-hidden border border-[#ababab] bg-white">
            {properties.map((p) => (
              <li key={p} role="treeitem" aria-selected={p === "Testo"} className="flex h-5 items-center pl-[9px]">
                <span className="w-[11px] shrink-0">{expandable.includes(p) && <Expander open={false} />}</span>
                <span className={"flex-1 pl-0.5 pt-0.5 leading-[18px]" + (p === "Testo" ? " bg-[#e4f1f9]" : "")}>{p}</span>
              </li>
            ))}
          </ul>
          <div className="flex min-w-0 flex-1 flex-col gap-[7px]">
            <textarea aria-label="Espressione" className="block h-[245px] w-full shrink-0 resize-none border border-[#ababab] bg-[#f7f7f7] p-1 outline-none" />
            <div className="flex min-h-0 flex-1 gap-[5px]">
              <div className="w-[150px] shrink-0 overflow-hidden border border-[#ababab] bg-white pt-px">
                <ul role="tree" className="h-full overflow-hidden leading-[22px]">
                  <li role="treeitem" aria-selected="true" className="-mt-[15px] ml-[19px] mr-px h-[22px] bg-[#cde5f7] pl-[3px]">Campi</li>
                  {categories.map((x) => <li key={x} role="treeitem" aria-selected="false" className="pl-[22px]">{x}</li>)}
                  <li role="treeitem" aria-selected="false" className="flex items-center pl-[7px]"><span className="w-[15px]"><Expander open /></span>Funzioni</li>
                  {functions.map((x) => <li key={x} role="treeitem" aria-selected="false" className="pl-10">{x}</li>)}
                </ul>
              </div>
              <div className="flex min-w-0 flex-1 flex-col gap-[5px]">
                <input aria-label="Cerca campi" placeholder="Enter text to search..." className="h-[22px] w-full shrink-0 border border-[#ababab] bg-white px-1 outline-none placeholder:text-[#999]" />
                <ul role="tree" className="min-h-0 flex-1 overflow-hidden border border-[#ababab] bg-white">
                  <li role="treeitem" aria-selected="false" className="flex h-5 items-center gap-1 pl-[7px]">
                    <span className="w-[9px]"><Expander open /></span>
                    <Svg w={16} h={14} vb="0 0 16 14"><rect x=".5" y=".5" width="15" height="13" stroke={GRAY} /><rect x="5" y="3" width="6" height="8" rx="1" fill={TAN} /><path d="M6 4.500h4" stroke="#ecd6ba" /></Svg>
                    <span className="pt-0.5">jsonDataSource1</span>
                  </li>
                  {fields.map((f) => (
                    <li key={f} role="treeitem" aria-selected={f === "CustomerCode"} className={"ml-10 flex h-5 items-center gap-1" + (f === "CustomerCode" ? " bg-[#cde5f7]" : "")}>
                      <FieldIcon text={f === "ExecutedQuantity" ? "1,2" : "ab"} /><span className="pt-0.5">{f}</span>
                    </li>
                  ))}
                </ul>
              </div>
              <div className="w-[248px] shrink-0 border border-[#ababab] px-1 py-1 leading-[18px]">Il tipo di questo campo è:System.String</div>
            </div>
          </div>
        </div>
        <div className="flex h-[54px] shrink-0 justify-end gap-1 pr-[31px] pt-3">
          <button type="button" className="h-6 w-[70px] border border-[#0173c7] bg-[#fdfdfd]">OK</button>
          <button type="button" className="h-6 w-[70px] border border-[#ababab] bg-[#fdfdfd]">Annulla</button>
          <button type="button" className="h-6 w-[70px] border border-[#ababab] bg-[#fdfdfd]">Applica</button>
        </div>
      </div>
    </div>
  );
}

export default function App() {
  return (
    <div className={"flex h-screen flex-col border-b border-[#a9b6bb] bg-white text-[11px] leading-4 text-[#444] " + FONT}>
      <TitleBar />
      <div className="flex h-11 shrink-0 items-end px-5 pt-5">
        <div className="flex h-6 w-[159px] items-center justify-between border-x border-t border-[#ababab] bg-[#f8f8f8] pl-[11px] pr-2">
          <button type="button" className="pt-0.5 text-[#0173c7]">Report1</button>
          <button type="button" aria-label="Chiudi scheda"><Cross size={7} color="#333" weight={2.2} /></button>
        </div>
        <button type="button" aria-label="Nuova scheda" className="ml-[10px] flex h-6 items-center"><Svg w={9} h={9} vb="0 0 9 9"><path d="M4.500 0v9M0 4.500h9" stroke="#333" /></Svg></button>
      </div>
      <main className="mx-5 mb-5 flex min-h-0 flex-1 flex-col border-x border-t border-[#ababab]">
        <div className="flex h-8 shrink-0 items-stretch bg-[#0173c7] text-white">
          <div className="flex w-[281px] items-center gap-4 pl-[9px]">
            <button type="button" aria-label="Annulla"><Svg w={13} h={11} vb="0 0 13 11"><path d="M0 4.500L5.500 0v3C10 3 12 6 12 10 10 7 8.500 6.300 5.500 6.300V9z" fill="#9dc4f2" /></Svg></button>
            <button type="button" aria-label="Ripeti"><Svg w={13} h={11} vb="0 0 13 11"><path d="M12 4.500L6.500 0v3C2 3 0 6 0 10c2-3 3.500-3.700 6.500-3.700V9z" fill="#3f97dc" /></Svg></button>
          </div>
          <div className="flex w-[100px] items-center justify-center whitespace-nowrap bg-[#005a9e] pt-0.5">Strumenti di testo</div>
        </div>
        <Ribbon />
        <div className="flex min-h-0 flex-1">
          <Toolbox />
          <div className="flex min-w-0 flex-1 flex-col">
            <DesignSurface />
            <Analyzer />
          </div>
          <aside className="flex w-[391px] shrink-0 flex-col border-l border-[#ababab] bg-[#f7f7f7]">
            <ReportExplorer />
            <Properties />
          </aside>
        </div>
      </main>
      <ExpressionEditor />
    </div>
  );
}
